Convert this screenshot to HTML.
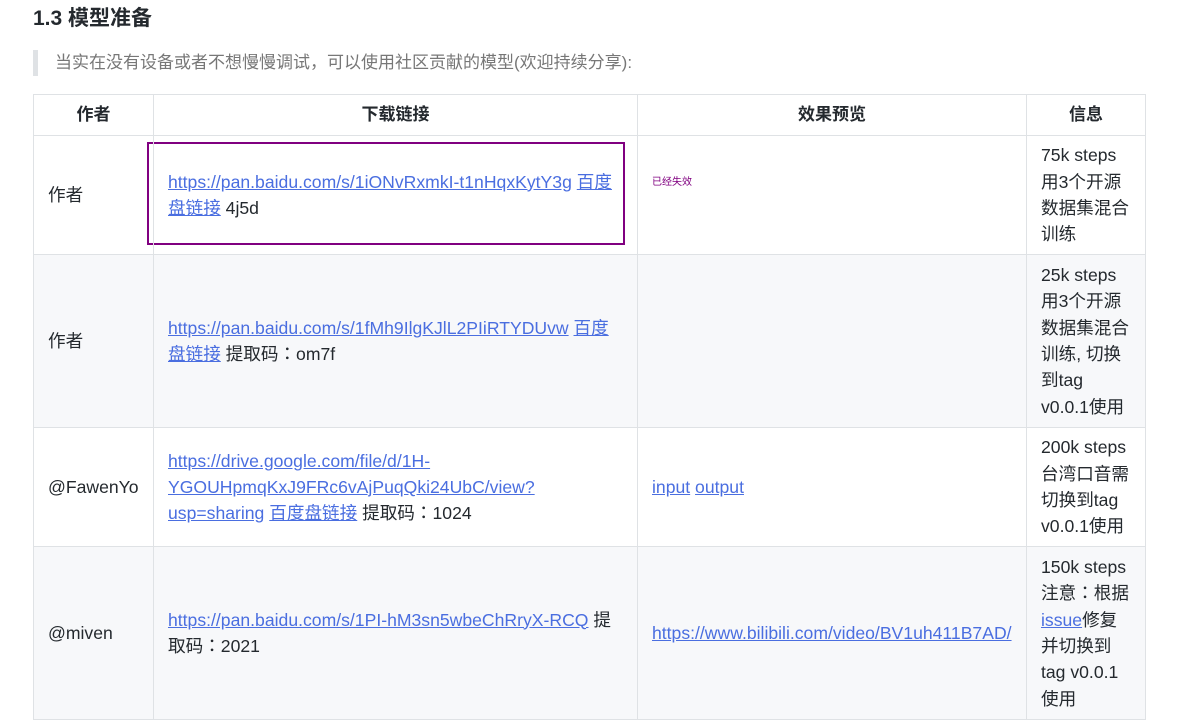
<!DOCTYPE html>
<html><head><meta charset="utf-8"><style>
body{margin:0;background:#fff;font-family:"Liberation Sans","Noto Sans CJK TC",sans-serif;color:#24292e;width:1185px;height:698px;overflow:hidden;position:relative}
h3{position:absolute;left:33px;top:4px;margin:0;font-size:21px;font-weight:bold;line-height:30px;font-family:"Liberation Sans","Noto Sans CJK SC",sans-serif}
.bq{position:absolute;left:33px;top:50px;height:26px;border-left:5px solid #dfe2e5;padding-left:17px;color:#777;font-size:17px;line-height:26px;font-family:"Liberation Sans","Noto Sans CJK SC",sans-serif}
table{position:absolute;left:33px;top:94px;border-collapse:collapse;table-layout:fixed;font-size:17.6px;line-height:26.3px}
td,th{border:1px solid #dfe2e5;padding:0 14px;vertical-align:middle;overflow-wrap:anywhere;word-break:normal}
th{font-weight:bold;text-align:center;height:40px;font-size:17px}
tr.g td{background:#f7f8fa}
a{color:#4a6ee0;text-decoration:underline}
.box{position:absolute;left:147px;top:142px;width:474px;height:99px;border:2px solid #800080}
.sm{font-size:10px;color:#800080;position:relative;top:-14px}
</style></head><body>
<h3>1.3 模型准备</h3>
<div class="bq">当实在没有设备或者不想慢慢调试，可以使用社区贡献的模型(欢迎持续分享):</div>
<div class="box"></div>
<table>
<colgroup><col style="width:120px"><col style="width:484px"><col style="width:389px"><col style="width:119px"></colgroup>
<tr><th>作者</th><th>下载链接</th><th>效果预览</th><th>信息</th></tr>
<tr style="height:119px"><td>作者</td><td><a>https://pan.baidu.com/s/1iONvRxmkI-t1nHqxKytY3g</a> <a>百度盘链接</a> 4j5d</td><td><span class="sm">已经失效</span></td><td>75k steps 用3个开源数据集混合训练</td></tr>
<tr class="g" style="height:173px"><td>作者</td><td><a>https://pan.baidu.com/s/1fMh9IlgKJlL2PIiRTYDUvw</a> <a>百度盘链接</a> 提取码：om7f</td><td></td><td>25k steps 用3个开源数据集混合训练, 切换到tag v0.0.1使用</td></tr>
<tr style="height:119px"><td>@FawenYo</td><td><a>https://drive.google.com/file/d/1H-YGOUHpmqKxJ9FRc6vAjPuqQki24UbC/view?usp=sharing</a> <a>百度盘链接</a> 提取码：1024</td><td><a>input</a> <a>output</a></td><td>200k steps 台湾口音需切换到tag v0.0.1使用</td></tr>
<tr class="g" style="height:173px"><td>@miven</td><td><a>https://pan.baidu.com/s/1PI-hM3sn5wbeChRryX-RCQ</a> 提取码：2021</td><td><a>https://www.bilibili.com/video/BV1uh411B7AD/</a></td><td>150k steps 注意：根据 <a>issue</a>修复 并切换到 tag v0.0.1 使用</td></tr>
</table>
</body></html>
